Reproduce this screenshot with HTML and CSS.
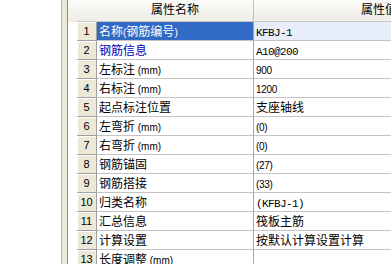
FILE: index.html
```html
<!DOCTYPE html>
<html>
<head>
<meta charset="utf-8">
<link rel="stylesheet" href="styles.css">
</head>
<body>
<div class="app">
  <div class="pane"></div>
  <div class="splitter"></div>
  <div class="gridwrap">
    <div class="grid">
      <div class="gap hd"></div><div class="rh hd"></div><div class="name hd ctr">属性名称</div><div class="val hd ctr">属性值</div>

      <div class="gap"></div><div class="rh">1</div><div class="name sel">名称<span class="a">(</span>钢筋编号<span class="a">)</span></div><div class="val selv"><span class="m">KFBJ-1</span></div>
      <div class="gap"></div><div class="rh">2</div><div class="name blue">钢筋信息</div><div class="val"><span class="m">A10@200</span></div>
      <div class="gap"></div><div class="rh">3</div><div class="name">左标注<span class="a"> (mm)</span></div><div class="val"><span class="n">900</span></div>
      <div class="gap"></div><div class="rh">4</div><div class="name">右标注<span class="a"> (mm)</span></div><div class="val"><span class="n">1200</span></div>
      <div class="gap"></div><div class="rh">5</div><div class="name">起点标注位置</div><div class="val">支座轴线</div>
      <div class="gap"></div><div class="rh">6</div><div class="name">左弯折<span class="a"> (mm)</span></div><div class="val"><span class="n">(0)</span></div>
      <div class="gap"></div><div class="rh">7</div><div class="name">右弯折<span class="a"> (mm)</span></div><div class="val"><span class="n">(0)</span></div>
      <div class="gap"></div><div class="rh">8</div><div class="name">钢筋锚固</div><div class="val"><span class="n">(27)</span></div>
      <div class="gap"></div><div class="rh">9</div><div class="name">钢筋搭接</div><div class="val"><span class="n">(33)</span></div>
      <div class="gap"></div><div class="rh">10</div><div class="name">归类名称</div><div class="val"><span class="m">(KFBJ-1)</span></div>
      <div class="gap"></div><div class="rh">11</div><div class="name">汇总信息</div><div class="val">筏板主筋</div>
      <div class="gap"></div><div class="rh">12</div><div class="name">计算设置</div><div class="val">按默认计算设置计算</div>
      <div class="gap"></div><div class="rh">13</div><div class="name">长度调整<span class="a"> (mm)</span></div><div class="val"></div>
    </div>
  </div>
</div>
</body>
</html>
```
FILE: styles.css
```css
html, body {
  margin: 0;
  padding: 0;
  background: #ffffff;
}
.app {
  display: flex;
  width: 391px;
  height: 264px;
  overflow: hidden;
  font-family: "Noto Sans CJK SC", "Noto Sans", sans-serif;
  font-size: 12px;
  color: #000;
}
.pane {
  width: 61px;
  flex: none;
  background: #fff;
}
.splitter {
  width: 5px;
  flex: none;
  background: #ece9d8;
  border-left: 1px solid #b4b4b4;
  border-right: 1px solid #8c8c8c;
}
.gridwrap {
  flex: 1;
  overflow: hidden;
  background: #fff;
}
.grid {
  display: grid;
  grid-template-columns: 9px 20px 157px 250px;
  grid-template-rows: 22px;
  grid-auto-rows: 19px;
  width: 436px;
}
.grid > div {
  box-sizing: border-box;
  white-space: nowrap;
  overflow: hidden;
  line-height: 18px;
}
.gap {
  background: #fff;
}
.rh {
  background: #ece9d8;
  border-right: 1px solid #a0a0a0;
  border-bottom: 1px solid #a0a0a0;
  box-shadow: inset 1px 1px 0 #fff;
  text-align: center;
  font-family: "Liberation Sans", sans-serif;
  font-size: 11px;
}
.name {
  border-right: 1px solid #a8a8a8;
  border-bottom: 1px solid #c4c4c4;
  padding-left: 2px;
}
.val {
  border-bottom: 1px solid #c4c4c4;
  padding-left: 2px;
}
.hd {
  background: linear-gradient(#fbfbf9, #eeede6);
  border-bottom: 1px solid #c8c8c0;
  line-height: 21px;
  color: #000;
}
.gap.hd {
  border-bottom: none;
}
.rh.hd {
  box-shadow: none;
  border-right: none;
}
.name.hd {
  border-right: 1px solid #c0c0b8;
}
.ctr {
  text-align: center;
  padding-left: 0;
}
.sel {
  background: #316ac5;
  color: #fff;
}
.selv {
  background: #e7eef9;
}
.blue {
  color: #0000b8;
}
.a {
  font-family: "Liberation Sans", sans-serif;
  font-size: 10px;
}
.m {
  font-family: "Liberation Mono", monospace;
  font-size: 11px;
  letter-spacing: -0.6px;
}
.n {
  font-family: "Liberation Sans", sans-serif;
  font-size: 10px;
  letter-spacing: -0.3px;
}
```
